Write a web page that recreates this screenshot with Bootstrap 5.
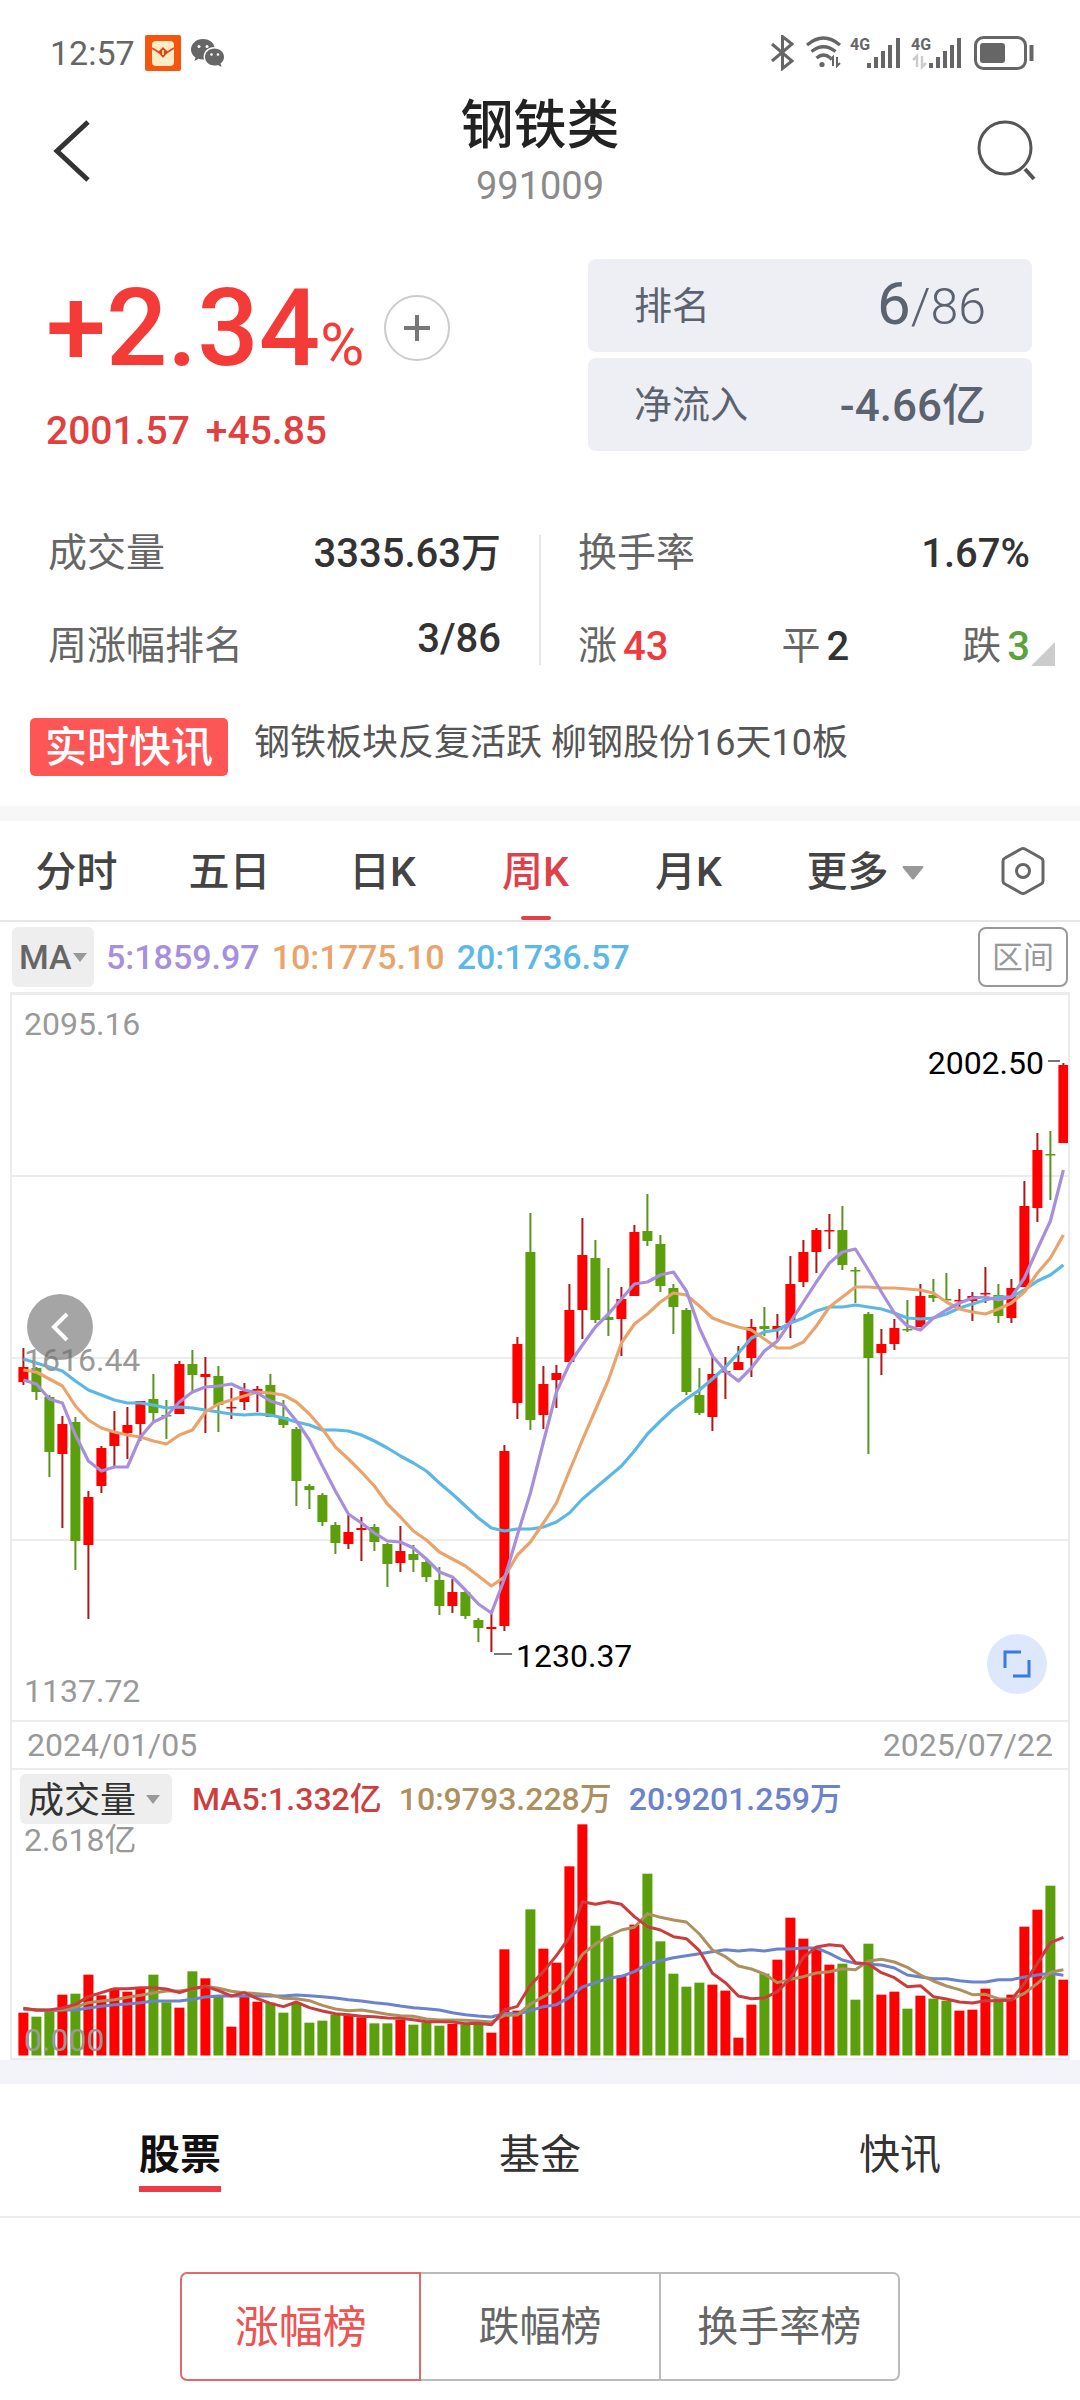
<!DOCTYPE html>
<html lang="zh-CN">
<head>
<meta charset="utf-8">
<meta name="viewport" content="width=device-width, initial-scale=1">
<title>钢铁类 991009</title>
<link href="https://cdn.jsdelivr.net/npm/bootstrap@5.3.0/dist/css/bootstrap.min.css" rel="stylesheet">
<style>
  body { font-family: Roboto, "Noto Sans CJK SC", sans-serif; background: #fff; color: #333; }
  button, select { font-family: inherit; }
  a { text-decoration: none; color: inherit; }
  svg { display: block; flex: none; }
  .bare { border: 0; background: none; padding: 0; color: inherit; }

  .status-bar { height: 96px; padding: 10px 46px 0 50px; font-size: 34px; color: #666; gap: 10px; }
  .top-bar { height: 120px; padding: 0 43px; }
  .top-bar .bare { width: 60px; }
  .top-bar .back { padding-left: 10px; }
  .top-bar h1 { font-size: 53px; line-height: 60px; font-weight: 500; margin: 0; color: #222; }
  .code-line { font-size: 38px; line-height: 60px; color: #8a8a8a; }

  .hero { padding: 43px 48px 0 46px; }
  .change { height: 138px; color: #f53b37; }
  .change .num { font-size: 108px; line-height: 138px; font-weight: 500; }
  .change .pct { font-size: 60px; line-height: 60px; font-weight: 400; }
  .quote-line { font-size: 39px; line-height: 68px; color: #e2403e; gap: 16px; padding-bottom: 6px; font-weight: 500; }
  .add-btn { width: 66px; height: 66px; border: 2px solid #ccc; border-radius: 50%; margin-left: 20px; }
  .tiles { width: 444px; gap: 6px; }
  .tile { height: 93px; border-radius: 8px; background: #eeeff5; color: #5c6370; padding: 2px 46px 0; font-size: 38px; }
  .tile .val { font-size: 44px; font-weight: 500; line-height: 60px; }
  .tile .rank { font-size: 60px; line-height: 60px; font-weight: 400; }
  .tile .total { font-size: 50px; line-height: 60px; font-weight: 300; }

  .stats { padding: 36px 0 0; font-size: 39px; color: #666; }
  .stats .line { height: 93px; }
  .stats .left { padding: 0 38px 0 48px; }
  .stats .right { padding: 0 50px 0 37px; }
  .stats .trio { gap: 6px; }
  .stats b { font-size: 40px; font-weight: 500; color: #333; }
  .stats b.up { color: #ef3b3f; }
  .stats b.down { color: #5aa33a; }
  .stats .rule { width: 2px; height: 130px; background: #e6e6e6; margin-top: 28px; }
  .corner { right: 25px; bottom: 27px; }

  .news { padding: 25px 30px 30px; gap: 26px; }
  .news-tag { background: #fe5657; color: #fff; border-radius: 5px; height: 58px; line-height: 60px; padding: 0 15px; font-size: 42px; font-weight: 500; }
  .news-text { font-size: 36px; line-height: 50px; color: #555; }

  .band-a { height: 15px; background: #f7f7f7; }
  .band-b { height: 24px; background: #f3f4f9; }

  .periods { height: 101px; border-bottom: 2px solid #e6e6e6; font-size: 41px; color: #444; }
  .periods .period { flex: 153 0 0; position: relative; padding-top: 4px; font-weight: 500; }
  .periods .more { flex: 200 0 0; gap: 13px; font-weight: 500; padding-top: 4px; }
  .periods .gear { flex: 115 0 0; }
  .periods .active { color: #e0404a; }
  .periods .active::after { content: ""; position: absolute; left: 50%; bottom: 0; width: 30px; height: 4px; margin-left: -15px; border-radius: 2px; background: #e0404a; }

  .ma-bar { height: 70px; padding: 5px 12px; font-size: 34px; gap: 12px; }
  .ma-bar span, .vol-legend { font-weight: 500; }
  .pick { position: relative; background: #eee; border-radius: 6px; }
  .pick select { appearance: none; border: 0; background: none; color: inherit; padding: 0; width: 100%; height: 100%; }
  .pick svg { position: absolute; top: 50%; margin-top: -4px; pointer-events: none; }
  .pick-ma { width: 82px; height: 60px; color: #666; }
  .pick-ma select { padding-left: 7px; font-weight: 500; }
  .pick-ma svg { right: 7px; }
  .pick-vol { width: 152px; height: 50px; color: #333; font-size: 36px; }
  .pick-vol select { padding-left: 8px; }
  .pick-vol svg { right: 12px; }
  .range-btn { width: 90px; height: 60px; border: 2px solid #999; border-radius: 8px; color: #999; font-size: 31px; background: #fff; padding: 2px 0 0; }
  .c-5 { color: #a78fe0; } .c-10 { color: #eaa46b; } .c-20 { color: #5bb8e8; }
  .v-5 { color: #cd3f3f; } .v-10 { color: #ad9060; } .v-20 { color: #6b82cc; }

  .chart { margin: 0 10px; border: 2px solid #ececec; border-top-width: 3px; font-size: 32px; }
  .chart svg.plot { width: 100%; height: auto; }
  .tag-text { position: absolute; line-height: 40px; color: #999; white-space: nowrap; }
  .tag-dark { color: #000; }
  .price-top { left: 12px; top: 9px; }
  .price-mid { left: 12px; top: 345px; }
  .price-low { left: 12px; bottom: 9px; }
  .mark-high { right: 24px; top: 48px; }
  .mark-low { left: 504px; top: 641px; }
  .vol-top { left: 12px; top: -4px; }
  .vol-zero { left: 12px; bottom: -2px; }
  .back-dot { position: absolute; left: 15px; top: 299px; width: 66px; height: 66px; border-radius: 50%; background: rgba(110,110,110,.62); }
  .zoom-dot { position: absolute; right: 21px; bottom: 26px; width: 60px; height: 60px; border-radius: 50%; background: #dde8fc; }
  .dates { height: 50px; border: 2px solid #ececec; border-width: 2px 0; padding: 0 15px; color: #999; }
  .vol-head { height: 54px; padding: 4px 8px 0; gap: 20px; }
  .vol-legend { gap: 17px; }

  .sections { height: 134px; border-bottom: 2px solid #ecebf1; font-size: 41px; padding-top: 41px; }
  .sections a { line-height: 60px; color: #333; display: inline-block; border-bottom: 6px solid transparent; padding-bottom: 1px; }
  .sections a.active { font-weight: 700; color: #111; border-color: #ec3b44; }
  .boards { width: 66.67%; margin: 54px auto 20px; }
  .boards button { height: 109px; flex: 1 0 0; border: 2px solid #bbb; background: #fff; color: #666; font-size: 41px; padding: 2px 0 0; }
  .boards button + button { border-left: 0; }
  .boards button:first-child { border-radius: 7px 0 0 7px; }
  .boards button:last-child { border-radius: 0 7px 7px 0; }
  .boards button.active { border-color: #e06a6a; color: #ee5253; font-size: 44px; }
</style>
</head>
<body>

<div class="status-bar d-flex align-items-center">
  <span>12:57</span>
  <svg width="36" height="36" viewBox="0 0 36 36"><rect width="36" height="36" rx="2" fill="#f4560f"/><rect x="7" y="6" width="22" height="25" rx="4" fill="#fdecc4"/><path d="M7 13l8 5h6l8-5" fill="none" stroke="#e2502a" stroke-width="2"/><path d="M18 12l5 5-5 6-5-6z" fill="#e0401c"/><path d="M18 15v5" stroke="#fdd27a" stroke-width="2"/></svg>
  <svg width="34" height="28" viewBox="0 0 34 28"><path fill="#666" d="M12 0C5 0 0 5 0 10.500c0 3.500 1.800 6 4.500 8L3.400 22l4.200-2.200c1.400.4 2.800.7 4.400.7h1C11 14 16 8 23.500 8 22.500 3 17.800 0 12 0z"/><path fill="#666" d="M33 18c0-5-4.500-8.500-9.500-8.500S14 13 14 18s4.500 8.500 9.500 8.500c1.200 0 2.400-.2 3.500-.6l3.500 2-1-3.300C31.700 23 33 20.800 33 18z"/><g fill="#fff"><circle cx="8" cy="7.500" r="1.500"/><circle cx="16" cy="7.500" r="1.500"/><circle cx="20.500" cy="15.500" r="1.300"/><circle cx="27" cy="15.500" r="1.300"/></g></svg>
  <div class="ms-auto d-flex align-items-center">
    <svg width="264" height="36" viewBox="770 35 264 36" fill="none" stroke="#666">
      <path d="M772 44l20 17-9.500 7.500v-32l9.500 7.500-20 17" stroke-width="3"/>
      <path d="M807 45q16.500-14 33 0M811.500 51.500q12-9.500 24 0M816.500 58q7-6 14 0" stroke-width="3.200"/>
      <circle cx="822" cy="64.500" r="2.600" fill="#666" stroke="none"/>
      <path d="M833 66v-9l-3 3M837 57v9l3-3" stroke-width="2"/>
      <g stroke-width="4"><path d="M869 63v5M876 57v11M883 51v17M890 45v23M898 38v30"/><path d="M931 63v5M938 57v11M945 51v17M952 45v23M959 38v30"/></g>
      <path d="M917 67V56l-4 4M922 56v11l4-4" stroke="#ccc" stroke-width="2.500"/>
      <rect x="975.500" y="37.500" width="50" height="31" rx="8" stroke-width="3"/>
      <rect x="980" y="43" width="25" height="20" rx="3" fill="#666" stroke="none"/>
      <path d="M1031.500 45v16" stroke-width="4"/>
      <g fill="#666" stroke="none" font-family="Roboto, sans-serif" font-weight="700" font-size="16"><text x="850" y="50">4G</text><text x="911" y="50">4G</text></g>
    </svg>
  </div>
</div>

<header class="top-bar d-flex justify-content-between align-items-start">
  <button class="bare back pt-4" type="button" aria-label="返回"><svg width="38" height="62" viewBox="0 0 38 62"><path d="M35 2L4 31l31 29" fill="none" stroke="#333" stroke-width="5"/></svg></button>
  <div class="text-center">
    <h1>钢铁类</h1>
    <div class="code-line">991009</div>
  </div>
  <button class="bare pt-4" type="button" aria-label="搜索"><svg width="60" height="62" viewBox="0 0 60 62"><circle cx="28" cy="28" r="26" fill="none" stroke="#555" stroke-width="3"/><path d="M48 49l9 10" stroke="#555" stroke-width="4"/></svg></button>
</header>

<section class="hero d-flex justify-content-between align-items-start">
  <div>
    <div class="change d-flex align-items-center">
      <div class="num">+2.34<span class="pct">%</span></div>
      <button class="add-btn bg-white p-0 d-flex align-items-center justify-content-center" type="button" aria-label="添加自选"><svg width="26" height="26" viewBox="0 0 26 26"><path d="M13 0v26M0 13h26" stroke="#777" stroke-width="4"/></svg></button>
    </div>
    <div class="quote-line d-flex"><span>2001.57</span><span>+45.85</span></div>
  </div>
  <div class="tiles d-flex flex-column">
    <div class="tile d-flex justify-content-between align-items-center"><span>排名</span><span><span class="rank">6</span><span class="total">/86</span></span></div>
    <div class="tile d-flex justify-content-between align-items-center"><span>净流入</span><span class="val">-4.66亿</span></div>
  </div>
</section>

<section class="stats d-flex align-items-start position-relative">
  <div class="left flex-fill w-50">
    <div class="line d-flex justify-content-between align-items-center"><span>成交量</span><b>3335.63万</b></div>
    <div class="line d-flex justify-content-between align-items-center"><span>周涨幅排名</span><b class="pb-3">3/86</b></div>
  </div>
  <div class="rule"></div>
  <div class="right flex-fill w-50">
    <div class="line d-flex justify-content-between align-items-center"><span>换手率</span><b>1.67%</b></div>
    <div class="line d-flex justify-content-between align-items-center">
      <span class="trio d-flex align-items-center">涨<b class="up">43</b></span><span class="trio d-flex align-items-center">平<b>2</b></span><span class="trio d-flex align-items-center">跌<b class="down">3</b></span>
    </div>
  </div>
  <svg class="corner position-absolute" width="24" height="24" viewBox="0 0 24 24"><path d="M24 0v24H0z" fill="#ccc"/></svg>
</section>

<section class="news d-flex align-items-start">
  <span class="news-tag">实时快讯</span>
  <a class="news-text" href="#news">钢铁板块反复活跃 柳钢股份16天10板</a>
</section>

<div class="band-a"></div>

<nav class="periods d-flex align-items-stretch">
  <button class="bare period" type="button">分时</button>
  <button class="bare period" type="button">五日</button>
  <button class="bare period" type="button">日K</button>
  <button class="bare period active" type="button">周K</button>
  <button class="bare period" type="button">月K</button>
  <button class="bare more d-flex align-items-center justify-content-center" type="button">更多<svg width="22" height="14" viewBox="0 0 22 14"><path d="M1 0h20q1 1 0 2L12 13q-1 1-2 0L1 2Q0 1 1 0z" fill="#999"/></svg></button>
  <button class="bare gear d-flex align-items-center justify-content-center" type="button" aria-label="设置"><svg width="46" height="50" viewBox="0 0 46 50" fill="none" stroke="#666" stroke-width="3"><path d="M21 3q2-1 4 0l16 9q2 1 2 3v20q0 2-2 3l-16 9q-2 1-4 0L5 38q-2-1-2-3V15q0-2 2-3z"/><circle cx="23" cy="25" r="6.500"/></svg></button>
</nav>

<div class="ma-bar d-flex align-items-center">
  <div class="pick pick-ma"><select aria-label="主图指标"><option>MA</option></select><svg width="14" height="9" viewBox="0 0 14 9"><path d="M0 0h14L7 9z" fill="#999"/></svg></div>
  <span class="c-5">5:1859.97</span><span class="c-10">10:1775.10</span><span class="c-20">20:1736.57</span>
  <button class="range-btn ms-auto" type="button">区间</button>
</div>

<section class="chart">
  <div class="position-relative">
    <svg class="plot" id="price" viewBox="12 995 1056 725"></svg>
    <span class="tag-text price-top">2095.16</span>
    <span class="tag-text price-mid">1616.44</span>
    <span class="tag-text price-low">1137.72</span>
    <span class="tag-text tag-dark mark-high">2002.50</span>
    <span class="tag-text tag-dark mark-low">1230.37</span>
    <button class="back-dot border-0 p-0 d-flex align-items-center justify-content-center" type="button" aria-label="向前"><svg width="18" height="30" viewBox="0 0 18 30"><path d="M16 2L3 15l13 13" fill="none" stroke="#fff" stroke-width="4"/></svg></button>
    <button class="zoom-dot border-0 p-0 d-flex align-items-center justify-content-center" type="button" aria-label="全屏"><svg width="28" height="28" viewBox="0 0 28 28" fill="none" stroke="#3b78e7" stroke-width="3"><path d="M2 18V2h16M26 10v16H10"/></svg></button>
  </div>
  <div class="dates d-flex justify-content-between align-items-center"><span>2024/01/05</span><span>2025/07/22</span></div>
  <div class="vol-head d-flex align-items-center">
    <div class="pick pick-vol"><select aria-label="副图指标"><option>成交量</option></select><svg width="14" height="9" viewBox="0 0 14 9"><path d="M0 0h14L7 9z" fill="#999"/></svg></div>
    <div class="vol-legend d-flex"><span class="v-5">MA5:1.332亿</span><span class="v-10">10:9793.228万</span><span class="v-20">20:9201.259万</span></div>
  </div>
  <div class="position-relative">
    <svg class="plot" id="volume" viewBox="12 1824 1056 234"></svg>
    <span class="tag-text vol-top">2.618亿</span>
    <span class="tag-text vol-zero">0.000</span>
  </div>
</section>

<div class="band-b"></div>

<nav class="sections d-flex text-center">
  <div class="col-4"><a class="active" href="#stocks">股票</a></div>
  <div class="col-4"><a href="#funds">基金</a></div>
  <div class="col-4"><a href="#flash">快讯</a></div>
</nav>

<div class="boards d-flex">
  <button class="active" type="button">涨幅榜</button>
  <button type="button">跌幅榜</button>
  <button type="button">换手率榜</button>
</div>

<script src="https://cdn.jsdelivr.net/npm/bootstrap@5.3.0/dist/js/bootstrap.bundle.min.js"></script>
<script>
  const RED = '#fe0000', GREEN = '#5ba00c', X0 = 23.4, STEP = 13;
  const x = i => X0 + STEP * i;

  // direction, high, body top, body bottom, low
  const candles = `r1348,1367,1382,1385 g1367,1368,1392,1400 g1395,1397,1452,1477 r1416,1424,1454,1528 g1417,1422,1541,1570
r1491,1497,1545,1619 r1446,1448,1486,1493 r1411,1432,1446,1468 r1407,1425,1433,1459 r1401,1401,1424,1441
g1374,1399,1413,1422 g1400,1415,1416,1439 r1361,1364,1414,1414 g1350,1364,1375,1391 r1357,1374,1377,1433
g1366,1376,1405,1432 r1388,1407,1408,1419 r1383,1391,1402,1410 r1386,1389,1394,1412 g1374,1385,1417,1417
g1400,1417,1425,1428 g1427,1429,1481,1506 g1484,1486,1490,1509 g1493,1495,1522,1526 g1522,1525,1543,1554
r1515,1532,1544,1549 r1517,1528,1530,1561 g1524,1527,1542,1551 g1543,1544,1564,1587 r1526,1551,1563,1572
g1545,1554,1560,1572 g1560,1562,1577,1582 g1567,1580,1606,1615 r1579,1592,1606,1613 g1591,1592,1616,1619
g1618,1620,1628,1642 r1613,1627,1629,1652 r1445,1451,1626,1631 r1337,1344,1403,1419 g1213,1252,1420,1430
r1366,1384,1415,1429 r1365,1373,1380,1408 r1284,1310,1362,1362 r1218,1255,1310,1339 g1240,1258,1320,1323
g1268,1317,1320,1336 r1287,1299,1319,1356 r1225,1232,1296,1296 g1194,1231,1241,1246 g1235,1244,1286,1292
g1284,1288,1307,1334 g1308,1310,1392,1395 g1368,1395,1413,1415 r1354,1374,1417,1431 r1357,1371,1372,1399
r1346,1362,1370,1370 r1319,1327,1358,1377 g1307,1326,1329,1336 r1314,1326,1330,1340 r1256,1284,1323,1338
r1240,1252,1282,1287 r1228,1230,1252,1273 r1214,1230,1231,1249 g1206,1230,1265,1270 g1267,1270,1271,1303
g1312,1314,1358,1454 r1329,1344,1353,1375 r1319,1328,1344,1350 g1300,1329,1330,1332 r1284,1296,1327,1327
g1279,1295,1298,1302 g1273,1299,1300,1300 r1289,1300,1301,1308 r1292,1296,1301,1321 r1267,1293,1294,1303
g1284,1295,1316,1323 r1279,1288,1318,1323 r1181,1206,1287,1287 r1133,1150,1208,1222 g1131,1154,1155,1200 r1063,1065,1143,1143`
    .split(/\s+/).map(s => [s[0], ...s.slice(1).split(',').map(Number)]);

  const ma5 = [1380,1384,1399,1403,1435,1461,1471,1467,1467,1437,1422,1416,1402,1392,1387,1386,1384,1390,1393,1401,1405,1421,1440,1466,1491,1514,1523,1533,1541,1542,1548,1559,1572,1577,1590,1604,1613,1579,1535,1493,1442,1392,1364,1345,1327,1314,1299,1284,1282,1275,1272,1291,1328,1356,1371,1381,1368,1351,1341,1322,1302,1282,1263,1252,1249,1270,1292,1313,1326,1330,1318,1310,1303,1298,1297,1300,1297,1278,1249,1221,1170];
  const ma10 = [1370,1372,1379,1386,1406,1420,1428,1432,1435,1437,1441,1444,1435,1430,1412,1404,1400,1396,1392,1393,1395,1402,1414,1429,1447,1459,1472,1486,1504,1517,1531,1540,1552,1559,1566,1576,1586,1577,1555,1542,1523,1503,1471,1440,1410,1380,1343,1324,1314,1302,1293,1295,1306,1318,1323,1327,1330,1339,1348,1348,1342,1326,1307,1297,1287,1287,1288,1288,1289,1290,1293,1302,1309,1312,1314,1309,1303,1292,1273,1258,1235];
  const ma20 = [1359,1363,1367,1371,1381,1390,1395,1400,1403,1403,1405,1408,1407,1408,1410,1412,1414,1415,1414,1415,1418,1422,1425,1430,1430,1431,1435,1441,1448,1456,1463,1471,1483,1494,1506,1518,1528,1531,1529,1529,1527,1522,1513,1499,1488,1477,1466,1451,1434,1421,1409,1399,1390,1379,1367,1353,1338,1332,1330,1323,1318,1311,1307,1307,1305,1307,1309,1313,1318,1319,1318,1314,1308,1304,1300,1297,1297,1290,1281,1275,1265];

  // volume series, three units to one drawing unit, measured down from 1720
  const vols = [878,890,873,824,821,764,826,806,815,806,764,847,863,754,775,828,920,827,845,848,878,848,908,902,884,886,892,910,910,899,914,908,917,912,914,910,938,688,872,568,686,728,439,313,617,650,767,614,461,664,761,800,788,794,812,953,854,761,719,593,656,686,734,731,839,671,824,815,866,827,836,842,872,869,806,836,824,620,569,497,779];
  const vma5 = [865,870,870,864,853,830,818,806,806,803,803,807,818,806,799,812,828,818,836,850,860,846,863,873,881,884,889,890,894,895,899,905,905,906,911,910,914,870,859,795,755,707,652,545,553,545,553,590,620,630,650,656,692,760,788,828,836,834,815,775,712,681,674,678,728,732,758,773,800,797,830,837,846,849,842,842,840,790,730,668,652];
  const vma10 = [868,870,870,869,862,848,843,839,832,826,819,813,813,808,799,805,814,818,821,824,835,836,842,856,867,872,870,876,883,887,889,897,900,900,901,903,906,886,885,852,830,810,765,703,672,648,630,622,581,592,600,606,642,690,710,738,747,762,788,778,770,759,755,746,749,723,718,726,742,765,783,798,809,824,823,836,838,820,790,757,749];
  const vma20 = [866,870,872,870,870,864,859,854,852,848,843,843,843,838,831,828,828,828,828,828,828,825,827,830,834,839,843,848,852,858,863,866,870,878,884,888,891,880,882,872,860,854,832,801,788,775,769,755,732,722,713,707,701,695,689,693,689,693,687,687,684,684,700,720,730,733,735,744,765,771,776,776,782,786,786,779,779,771,765,760,766];

  const rect = (cx, w, top, bottom, fill) => `<rect x="${cx - w / 2}" y="${top}" width="${w}" height="${Math.max(1.5, bottom - top)}" fill="${fill}"/>`;
  const line = (ys, color, w) => `<polyline points="${ys.map((y, i) => x(i) + ',' + y).join(' ')}" fill="none" stroke="${color}" stroke-width="${w}" stroke-linejoin="round"/>`;

  let p = [1176, 1358, 1540].map(y => `<path d="M12 ${y}H1068" stroke="#ececec" stroke-width="2"/>`).join('');
  candles.forEach(([d, high, top, bottom, low], i) => {
    const red = d === 'r';
    p += rect(x(i), 2, high, low, red ? '#b01818' : '#5b9420') + rect(x(i), 10, top, bottom, red ? RED : GREEN);
  });
  p += line(ma20, '#5bb8e4', 3.2) + line(ma10, '#eaa46b', 3.2) + line(ma5, '#a78fdc', 3.2);
  p += '<path d="M1048 1061h12M494 1654h18" stroke="#777" stroke-width="2"/>';
  document.getElementById('price').innerHTML = p;

  const scale = a => a.map(v => 1720 + v / 3);
  let v = '';
  scale(vols).forEach((y, i) => { v += rect(x(i), 10, y, 2055.5, candles[i][0] === 'r' ? RED : GREEN); });
  v += line(scale(vma20), '#6b82cc', 3) + line(scale(vma10), '#ad9060', 3) + line(scale(vma5), '#cb3d3d', 3);
  document.getElementById('volume').innerHTML = v;
</script>
</body>
</html>
